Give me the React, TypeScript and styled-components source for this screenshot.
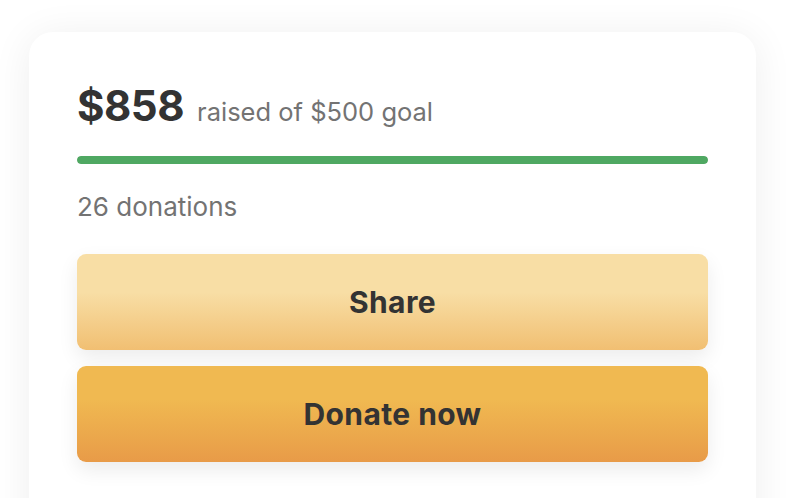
import React from "react";
import styled, { createGlobalStyle } from "styled-components";

const Global = createGlobalStyle`
  html, body { margin: 0; padding: 0; background: #ffffff; }
  body { font-family: "Inter", "Open Sans", sans-serif; -webkit-font-smoothing: antialiased; }
  * { box-sizing: border-box; }
`;

const Page = styled.div`
  padding: 32px 30px 0 29px;
  height: 498px;
  overflow: hidden;
`;

const Card = styled.div`
  width: 727px;
  min-height: 520px;
  background: #ffffff;
  border-radius: 24px;
  box-shadow: 0 4px 40px rgba(0, 0, 0, 0.07);
  padding: 53px 48px;
  display: flex;
  flex-direction: column;
`;

const Headline = styled.div`
  display: flex;
  align-items: baseline;
  gap: 13px;
  line-height: 1;
`;

const Amount = styled.span`
  font-size: 42px;
  font-weight: 700;
  letter-spacing: -0.5px;
  color: #333333;
`;

const Goal = styled.span`
  font-size: 25.5px;
  font-weight: 400;
  color: #737373;
`;

const Track = styled.div`
  margin-top: 29px;
  height: 8px;
  border-radius: 4px;
  background: #e6e6e6;
  overflow: hidden;
`;

const Fill = styled.div`
  height: 100%;
  background: #4fa862;
  border-radius: 4px;
`;

const Count = styled.div`
  margin-top: 27px;
  font-size: 26px;
  line-height: 31px;
  color: #737373;
`;

const Actions = styled.div`
  margin-top: 32px;
  display: flex;
  flex-direction: column;
  gap: 16px;
`;

const Button = styled.button<{ $variant: "share" | "donate" }>`
  height: 96px;
  width: 100%;
  border: none;
  border-radius: 9px;
  font-family: inherit;
  font-size: 30px;
  font-weight: 700;
  letter-spacing: 0.4px;
  color: #333333;
  cursor: pointer;
  box-shadow: 0 8px 20px rgba(0, 0, 0, 0.08);
  background: ${(p) =>
    p.$variant === "share"
      ? "linear-gradient(180deg, #f8dea5 0%, #f8dea5 40%, #f1bf72 100%)"
      : "linear-gradient(180deg, #f0b951 0%, #f0b951 35%, #e89b48 100%)"};
`;

export default function App() {
  const raised = 858;
  const goal = 500;
  const pct = Math.min(100, (raised / goal) * 100);
  return (
    <>
      <Global />
      <Page>
        <Card>
          <Headline>
            <Amount>${raised}</Amount>
            <Goal>raised of ${goal} goal</Goal>
          </Headline>
          <Track>
            <Fill style={{ width: `${pct}%` }} />
          </Track>
          <Count>26 donations</Count>
          <Actions>
            <Button $variant="share">Share</Button>
            <Button $variant="donate">Donate now</Button>
          </Actions>
        </Card>
      </Page>
    </>
  );
}
